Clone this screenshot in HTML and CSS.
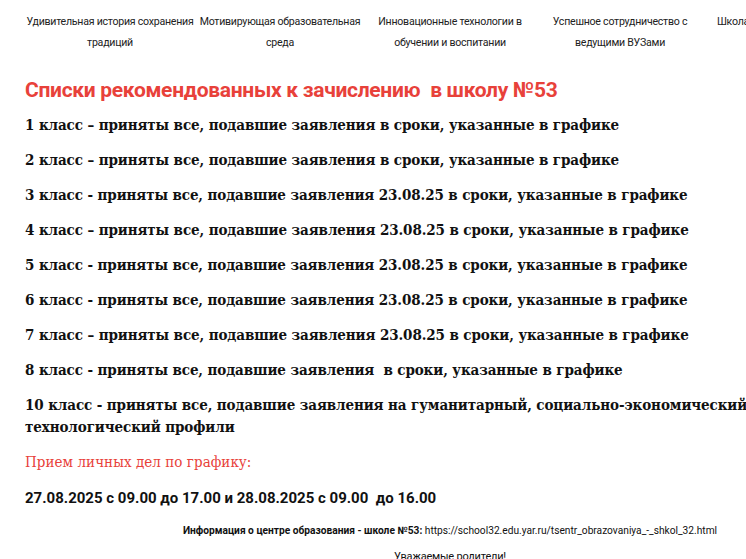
FILE: index.html
```html
<!DOCTYPE html>
<html lang="ru">
<head>
<meta charset="utf-8">
<title>Списки рекомендованных к зачислению</title>
<link rel="stylesheet" href="styles.css">
</head>
<body>
<div class="page">
  <nav class="nav">
    <a class="nav-item">Удивительная история сохранения традиций</a>
    <a class="nav-item">Мотивирующая образовательная среда</a>
    <a class="nav-item">Инновационные технологии в обучении и воспитании</a>
    <a class="nav-item">Успешное сотрудничество с ведущими ВУЗами</a>
    <a class="nav-item">Школа — территория развития талантов</a>
  </nav>
  <h1 class="title">Списки рекомендованных к зачислению&nbsp; в школу №53</h1>
  <p class="item">1 класс – приняты все, подавшие заявления в сроки, указанные в графике</p>
  <p class="item">2 класс – приняты все, подавшие заявления в сроки, указанные в графике</p>
  <p class="item">3 класс - приняты все, подавшие заявления 23.08.25 в сроки, указанные в графике</p>
  <p class="item">4 класс – приняты все, подавшие заявления 23.08.25 в сроки, указанные в графике</p>
  <p class="item">5 класс - приняты все, подавшие заявления 23.08.25 в сроки, указанные в графике</p>
  <p class="item">6 класс - приняты все, подавшие заявления 23.08.25 в сроки, указанные в графике</p>
  <p class="item">7 класс – приняты все, подавшие заявления 23.08.25 в сроки, указанные в графике</p>
  <p class="item">8 класс - приняты все, подавшие заявления&nbsp; в сроки, указанные в графике</p>
  <p class="item">10 класс - приняты все, подавшие заявления на гуманитарный, социально-экономический и технологический профили</p>
  <p class="schedule-title">Прием личных дел по графику:</p>
  <p class="schedule">27.08.2025 с 09.00 до 17.00 и 28.08.2025 с 09.00&nbsp; до 16.00</p>
  <p class="info"><b>Информация о центре образования - школе №53:</b> https://school32.edu.yar.ru/tsentr_obrazovaniya_-_shkol_32.html</p>
  <p class="greeting">Уважаемые родители!</p>
</div>
</body>
</html>
```
FILE: styles.css
```css
html, body {
  margin: 0;
  padding: 0;
  overflow: hidden;
  background: #fff;
}
body {
  font-family: Roboto, "Liberation Sans", sans-serif;
  color: #1a1a1a;
}
.page {
  width: 850px;
  padding-left: 25px;
}
.nav {
  display: flex;
  padding-top: 11px;
}
.nav-item {
  flex: 0 0 170px;
  text-align: center;
  font-size: 10.6px;
  letter-spacing: -0.25px;
  line-height: 21px;
  color: #222;
}
.title {
  margin: 24px 0 0;
  font-size: 21px;
  letter-spacing: -0.3px;
  line-height: 26px;
  font-weight: 700;
  color: #e8413a;
}
.item {
  margin: 11px 0 13px;
  font-family: "DejaVu Serif", serif;
  font-stretch: condensed;
  font-weight: 700;
  font-size: 15px;
  letter-spacing: -0.1px;
  line-height: 22px;
  color: #111;
}
.item + .item {
  margin-top: 0;
}
.schedule-title {
  margin: 0 0 14px;
  font-family: "DejaVu Serif", serif;
  font-stretch: condensed;
  font-size: 15px;
  letter-spacing: 0.05px;
  line-height: 22px;
  color: #e8413a;
}
.schedule {
  margin: 0 0 12px;
  font-size: 15px;
  line-height: 22px;
  font-weight: 700;
  color: #111;
}
.info {
  margin: 0;
  text-align: center;
  font-size: 10.2px;
  line-height: 20px;
  color: #111;
}
.greeting {
  margin: 7px 0 0;
  text-align: center;
  font-size: 11px;
  letter-spacing: -0.2px;
  line-height: 18px;
  color: #111;
}
```
